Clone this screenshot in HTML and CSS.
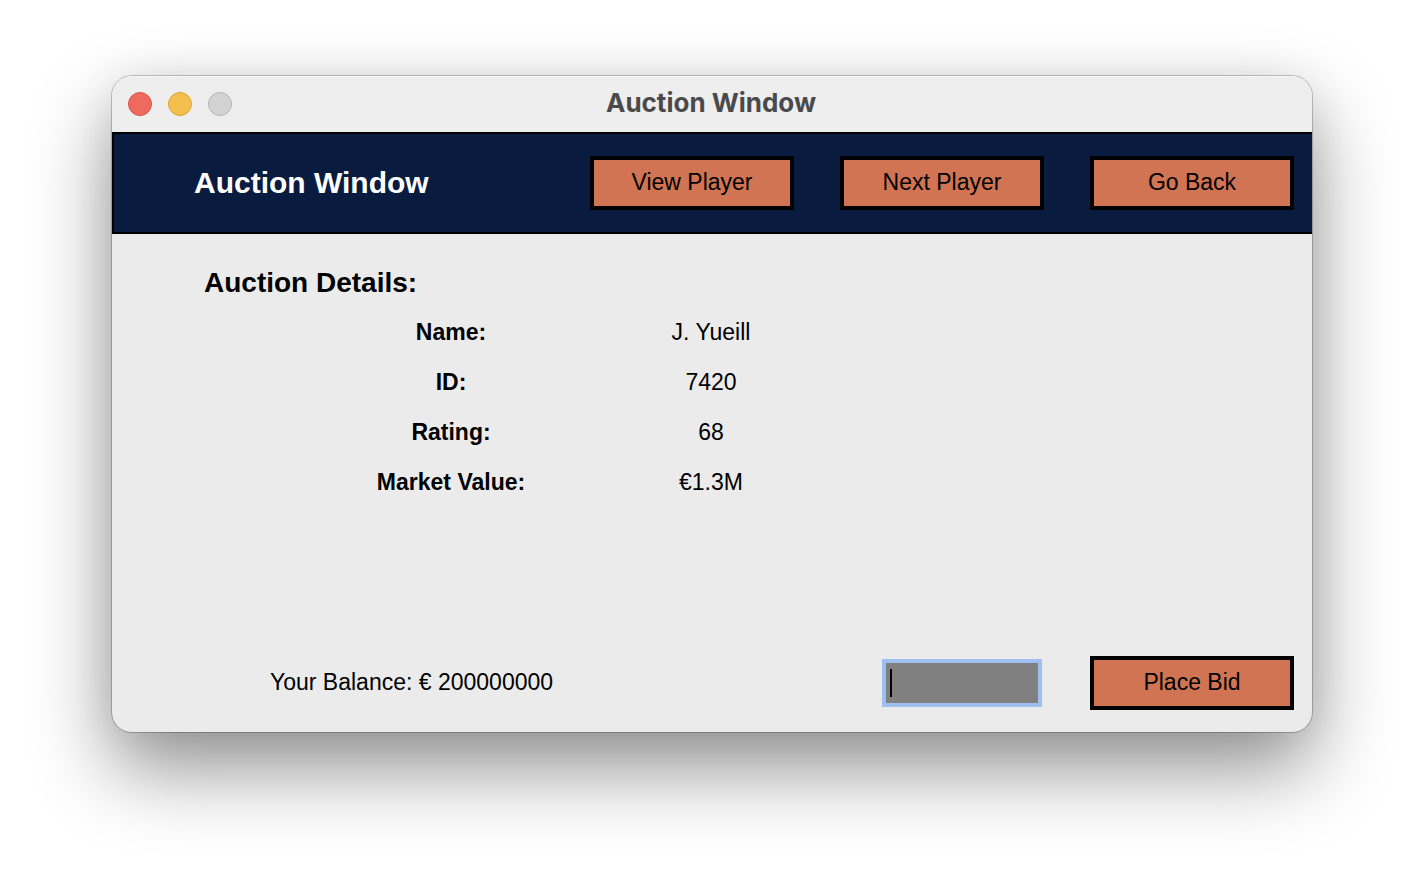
FILE: index.html
```html
<!DOCTYPE html>
<html lang="en">
<head>
<meta charset="utf-8">
<meta name="viewport" content="width=device-width, initial-scale=1">
<title>Auction Window</title>
<link rel="stylesheet" href="styles.css">
</head>
<body>
<div class="window">
  <div class="titlebar">
    <div class="lights">
      <button class="light light-close" type="button" aria-label="Close"></button>
      <button class="light light-minimize" type="button" aria-label="Minimize"></button>
      <button class="light light-zoom" type="button" aria-label="Zoom" disabled></button>
    </div>
    <div class="titlebar-text">Auction Window</div>
  </div>
  <header class="header">
    <h1 class="header-title">Auction Window</h1>
    <nav class="actions">
      <button class="button" type="button">View Player</button>
      <button class="button" type="button">Next Player</button>
      <button class="button" type="button">Go Back</button>
    </nav>
  </header>
  <main class="content">
    <h2 class="details-title">Auction Details:</h2>
    <table class="details">
      <tbody>
        <tr><th scope="row">Name:</th><td>J. Yueill</td></tr>
        <tr><th scope="row">ID:</th><td>7420</td></tr>
        <tr><th scope="row">Rating:</th><td>68</td></tr>
        <tr><th scope="row">Market Value:</th><td>€1.3M</td></tr>
      </tbody>
    </table>
  </main>
  <form class="bid">
    <label class="balance" for="bid-amount">Your Balance: € 200000000</label>
    <input class="bid-input" id="bid-amount" type="text">
    <button class="button" type="button">Place Bid</button>
  </form>
</div>
</body>
</html>
```
FILE: styles.css
```css
* {
  box-sizing: border-box;
}

body {
  margin: 0;
  padding: 76px 112px 148px;
  min-height: 100vh;
  display: flex;
  background: #fff;
  color: #000;
  font: 23px/28px "Liberation Sans", Arial, sans-serif;
}

.window {
  flex: 1;
  min-width: 0;
  display: flex;
  flex-direction: column;
  overflow: hidden;
  border-radius: 20px;
  background: #ebebeb;
  box-shadow: 0 0 0 1px rgba(0, 0, 0, 0.22), 0 36px 80px rgba(0, 0, 0, 0.44), 0 0 40px rgba(0, 0, 0, 0.06);
}

.titlebar {
  display: grid;
  grid-template-columns: 1fr auto 1fr;
  align-items: center;
  height: 56px;
  padding: 0 16px;
  background: #eeeeee;
  box-shadow: inset 0 1px 0 #f8f8f8;
}

.lights {
  display: flex;
  gap: 16px;
}

.light {
  width: 24px;
  height: 24px;
  padding: 0;
  border: 1px solid;
  border-radius: 50%;
}

.light-close {
  background: #ed6a5e;
  border-color: #d95448;
}

.light-minimize {
  background: #f5bf4f;
  border-color: #dca236;
}

.light-zoom {
  background: #d3d3d3;
  border-color: #b5b5b5;
}

.titlebar-text {
  padding: 0 2px 2px 0;
  color: #4a4a4a;
  font: bold 26px/32px Inter, sans-serif;
}

.header {
  display: flex;
  flex-wrap: wrap;
  align-items: center;
  justify-content: space-between;
  gap: 16px;
  padding: 22px 18px 22px 80px;
  border: solid #000;
  border-width: 2px 0 2px 2px;
  background: #0a1b40;
}

.header-title {
  margin: 0;
  color: #fff;
  font-size: 30px;
  line-height: 36px;
}

.actions {
  display: flex;
  flex-wrap: wrap;
  gap: 16px 46px;
}

.button {
  width: 204px;
  height: 54px;
  padding: 0 0 2px;
  border: 4px solid #000;
  border-radius: 0;
  background: #d07454;
  color: #000;
  font: inherit;
}

.content {
  flex: 1;
  padding: 24px 16px 24px 92px;
}

.details-title {
  margin: 0;
  font-size: 28px;
  line-height: 50px;
}

.details {
  width: 520px;
  max-width: 100%;
  margin-left: 117px;
  table-layout: fixed;
  border-collapse: collapse;
  text-align: center;
}

.details th,
.details td {
  height: 50px;
  padding: 0 0 2px;
}

.bid {
  display: flex;
  flex-wrap: wrap;
  align-items: center;
  gap: 16px 48px;
  padding: 0 18px 22px 158px;
}

.balance {
  flex: 1;
  padding-bottom: 2px;
  white-space: nowrap;
}

.bid-input {
  width: 160px;
  height: 48px;
  padding: 0 4px;
  border: 4px solid #9fbff0;
  border-radius: 0;
  outline: 0;
  background: linear-gradient(#000, #000) 4px 6px / 2px 28px no-repeat #808080;
  color: #000;
  font: inherit;
}

.bid-input:focus {
  background: #808080;
}

@media (max-width: 1200px) {
  body {
    padding: 24px;
  }

  .header,
  .content,
  .bid {
    padding-left: 24px;
  }

  .details {
    margin-left: 0;
  }
}
```
